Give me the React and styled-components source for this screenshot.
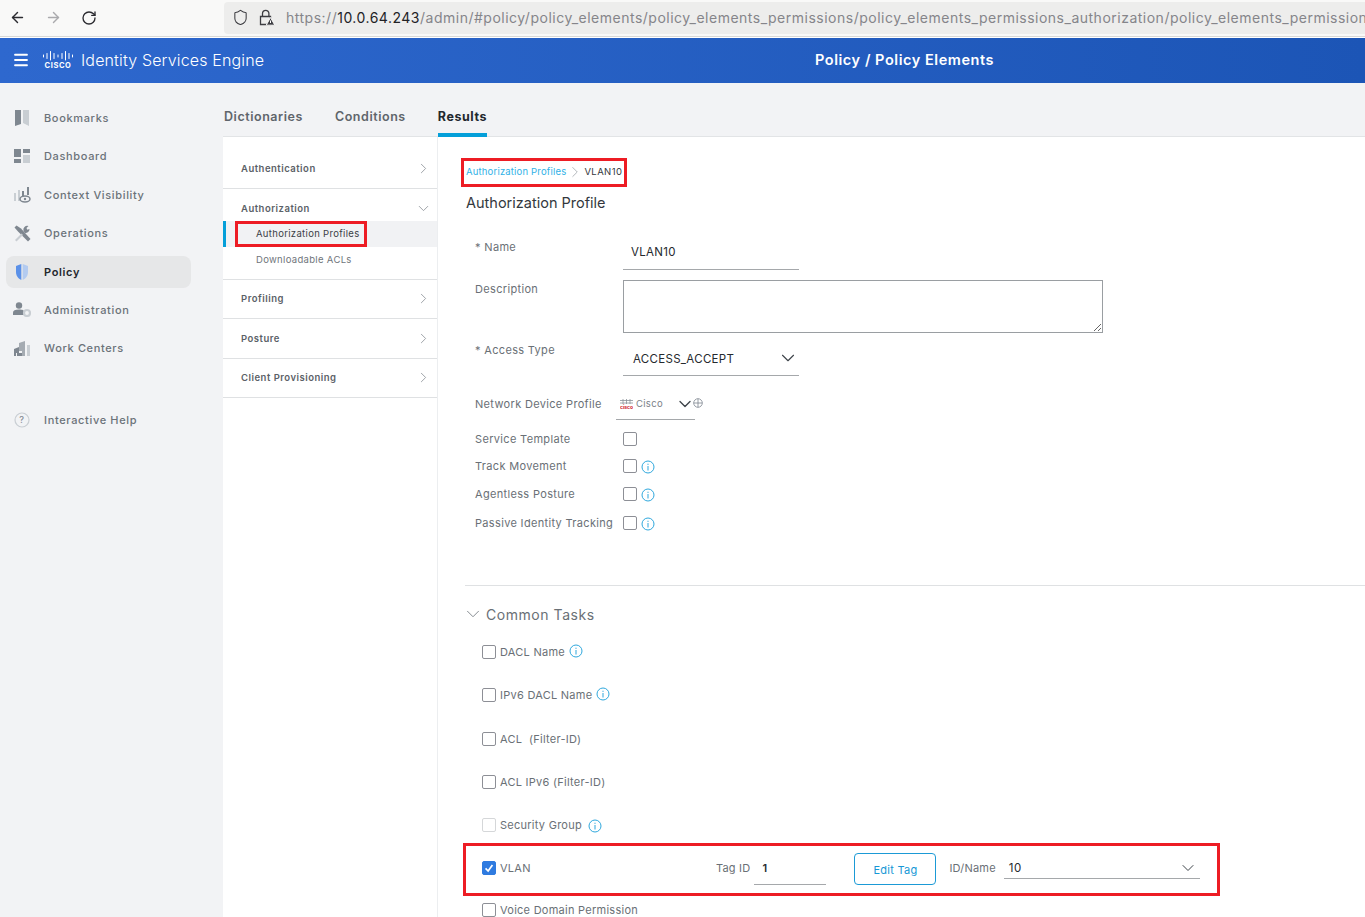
import React from 'react';
import styled, { createGlobalStyle } from 'styled-components';
import { ArrowLeft, ArrowRight, RotateCw, Shield, ChevronRight, ChevronDown, Menu } from 'lucide-react';

const GlobalStyle = createGlobalStyle`
  html, body { margin: 0; padding: 0; height: 100%; overflow: hidden; background: #fff; }
  body { font-family: Inter, "Noto Sans", sans-serif; }
`;

const BookmarkIcon = () => (
  <svg width="16" height="18" viewBox="0 0 16 18">
    <path d="M1 1h6v14l-6 2z" fill="#7f8790" />
    <path d="M9 1h6v16l-6-3z" fill="#c9ced3" />
  </svg>
);
const DashboardIcon = () => (
  <svg width="16" height="14" viewBox="0 0 16 14">
    <rect x="0" y="0" width="7" height="8" fill="#7f8790" />
    <rect x="9" y="0" width="7" height="4" fill="#7f8790" />
    <rect x="9" y="6" width="7" height="8" fill="#c9ced3" />
    <rect x="0" y="10" width="7" height="4" fill="#7f8790" />
  </svg>
);
const ContextIcon = () => (
  <svg width="17" height="16" viewBox="0 0 17 16">
    <rect x="0" y="6" width="2" height="8" fill="#c9ced3" />
    <rect x="4" y="3" width="2" height="11" fill="#c9ced3" />
    <rect x="8" y="4" width="2" height="5" fill="#7f8790" />
    <rect x="13" y="0" width="2" height="8" fill="#7f8790" />
    <ellipse cx="11" cy="12" rx="5" ry="3" fill="none" stroke="#7f8790" strokeWidth="1.5" />
    <circle cx="11" cy="12" r="1.2" fill="#7f8790" />
  </svg>
);
const OperationsIcon = () => (
  <svg width="17" height="17" viewBox="0 0 17 17">
    <path d="M0.500 2.500 2.500 0.500 7 3.500 16.500 14 14 16.500 4 6.500z" fill="#7f8790" />
    <path d="M1 15l6.500-6.500 1.500 1.500L2.500 16.500z" fill="#c9ced3" />
    <path d="M9.500 6a4 4 0 0 1 5-5l-2 2 .8 1.700L15.500 4a4 4 0 0 1-4.500 4z" fill="#7f8790" />
  </svg>
);
const PolicyIcon = () => (
  <svg width="14" height="16" viewBox="0 0 14 16">
    <path d="M6.300 0v16C2.500 14.500 1 11 1 8V2z" fill="#5b91e8" />
    <path d="M7.700 0v16c3.800-1.500 5.300-5 5.300-8V2z" fill="#b3cbf0" />
  </svg>
);
const AdminIcon = () => (
  <svg width="18" height="15" viewBox="0 0 18 15">
    <circle cx="6" cy="3.500" r="3.200" fill="#7f8790" />
    <path d="M0 13v-2.500C0 8.500 2 7.500 6 7.500s5 1 5 2V13z" fill="#7f8790" />
    <circle cx="14" cy="11" r="3" fill="none" stroke="#c9ced3" strokeWidth="2.200" />
  </svg>
);
const WorkIcon = () => (
  <svg width="17" height="15" viewBox="0 0 17 15">
    <path d="M0 8l5-2v9H3v-3H2v3H0z" fill="#7f8790" />
    <path d="M5 12h3v3H5z" fill="#7f8790" />
    <path d="M5 2l6-2v15H8v-5H5z" fill="#a5abb2" />
    <rect x="13" y="4" width="3" height="11" fill="#c9ced3" />
  </svg>
);
const HelpIcon = () => (
  <svg width="16" height="16" viewBox="0 0 16 16">
    <circle cx="8" cy="8" r="7" fill="none" stroke="#c9ced3" strokeWidth="1.200" />
    <text x="8" y="11" textAnchor="middle" fontSize="9" fill="#7f8790" fontFamily="Inter, sans-serif">?</text>
  </svg>
);
const LockIcon = () => (
  <svg width="16" height="17" viewBox="0 0 16 17">
    <path d="M3.500 7V4.500a3.200 3.200 0 0 1 6.400 0V7" fill="none" stroke="#3d3d42" strokeWidth="1.300" />
    <path d="M1.500 7.500h10v8h-10z" fill="none" stroke="#3d3d42" strokeWidth="1.300" />
    <path d="M11.500 8.500l4.300 7.700H7.200z" fill="#3d3d42" stroke="#f9f9f8" />
    <rect x="11" y="11.500" width="1" height="2.500" fill="#fff" />
  </svg>
);
const CiscoLogo = () => (
  <svg width="30" height="17" viewBox="0 0 30 17">
    <g stroke="#fff" strokeWidth="1" strokeLinecap="round">
      {[[0.5, 4, 6], [4, 2.500, 7.500], [7.500, 0.500, 9], [11, 2.500, 7.500], [15, 4, 6], [19, 2.500, 7.500], [22.500, 0.500, 9], [26, 2.500, 7.500], [29.500, 4, 6]].map(([x, y1, y2]) => (
        <line key={x} x1={x} x2={x} y1={y1} y2={y2} />
      ))}
    </g>
    <text x="15" y="16.500" textAnchor="middle" fontSize="7.500" fontWeight="700" letterSpacing="0.6" fill="#fff" fontFamily="Inter, sans-serif">CISCO</text>
  </svg>
);
const SmallCisco = () => (
  <svg width="13" height="11" viewBox="0 0 13 11">
    <path d="M0 2.500h13M0 5h13M3 1v5M6.500 1v5M10 1v5" stroke="#8a9299" strokeWidth="0.8" />
    <text x="6.500" y="10.800" textAnchor="middle" fontSize="5" fontWeight="700" fill="#d0202e" fontFamily="Inter, sans-serif">cisco</text>
  </svg>
);
const GlobeIcon = () => (
  <svg width="10" height="10" viewBox="0 0 10 10" fill="none" stroke="#7f8790" strokeWidth="0.8">
    <circle cx="5" cy="5" r="4.300" />
    <path d="M5 .7v8.600M.7 5h8.600" />
  </svg>
);
const InfoIcon = () => (
  <svg width="14" height="14" viewBox="0 0 14 14">
    <circle cx="7" cy="7" r="6" fill="none" stroke="#2fa8dd" strokeWidth="1" />
    <rect x="6.500" y="6" width="1" height="4.500" fill="#2fa8dd" />
    <rect x="6.500" y="3.700" width="1" height="1.200" fill="#2fa8dd" />
  </svg>
);
const CheckMark = () => (
  <svg width="14" height="14" viewBox="0 0 14 14">
    <path d="M3 7.500 6 10.500 11 3.500" fill="none" stroke="#fff" strokeWidth="2" />
  </svg>
);

const navItems = [
  { label: 'Bookmarks', icon: BookmarkIcon },
  { label: 'Dashboard', icon: DashboardIcon },
  { label: 'Context Visibility', icon: ContextIcon },
  { label: 'Operations', icon: OperationsIcon },
  { label: 'Policy', icon: PolicyIcon, active: true },
  { label: 'Administration', icon: AdminIcon },
  { label: 'Work Centers', icon: WorkIcon },
];

const taskRows = [
  { label: 'DACL Name', info: true, raised: true },
  { label: 'IPv6 DACL Name', info: true, raised: true },
  { label: 'ACL  (Filter-ID)' },
  { label: 'ACL IPv6 (Filter-ID)' },
  { label: 'Security Group', info: true, disabled: true, gapped: true },
];

const closedChevron = <ChevronRight size={17} color="#8f959b" strokeWidth={1.200} />;

export default function App() {
  return (
    <Page>
      <GlobalStyle />
      <BrowserBar>
        <BrowserButton><ArrowLeft size={17} color="#2b2b30" /></BrowserButton>
        <BrowserButton><ArrowRight size={17} color="#aaaaad" /></BrowserButton>
        <BrowserButton><RotateCw size={16} color="#2b2b30" /></BrowserButton>
        <UrlBar>
          <UrlIcon><Shield size={17} color="#3d3d42" strokeWidth={1.500} /></UrlIcon>
          <UrlIcon><LockIcon /></UrlIcon>
          <UrlText>
            https://<strong>10.0.64.243</strong>/admin/#policy/policy_elements/policy_elements_permissions/policy_elements_permissions_authorization/policy_elements_permissions
          </UrlText>
        </UrlBar>
      </BrowserBar>

      <Header>
        <Menu size={18} color="#fff" strokeWidth={2.400} />
        <LogoSlot><CiscoLogo /></LogoSlot>
        <ProductName>Identity Services Engine</ProductName>
        <HeaderTitle>Policy / Policy Elements</HeaderTitle>
      </Header>

      <Body>
        <Sidebar>
          {navItems.map(({ label, icon: Icon, active }) => (
            <NavItem key={label} $active={active}>
              <NavIcon><Icon /></NavIcon>
              {label}
            </NavItem>
          ))}
          <HelpItem>
            <NavIcon><HelpIcon /></NavIcon>
            Interactive Help
          </HelpItem>
        </Sidebar>

        <Content>
          <Tabs>
            <Tab>Dictionaries</Tab>
            <Tab>Conditions</Tab>
            <Tab $active>Results</Tab>
          </Tabs>

          <Split>
            <SubNav>
              <SubGroup $h={52}>
                <SubHead $pad="11px 5px 0 18px">Authentication{closedChevron}</SubHead>
              </SubGroup>
              <SubGroup $h={91}>
                <SubHead $pad="6px 5px 0 18px" $h="32px">
                  Authorization
                  <ChevronDown size={17} color="#8f959b" strokeWidth={1.200} />
                </SubHead>
                <SubLink $active><Marked>Authorization Profiles</Marked></SubLink>
                <SubLink>Downloadable ACLs</SubLink>
              </SubGroup>
              <SubGroup $h={39}>
                <SubHead $pad="0 5px 2px 18px">Profiling{closedChevron}</SubHead>
              </SubGroup>
              <SubGroup $h={40}>
                <SubHead>Posture{closedChevron}</SubHead>
              </SubGroup>
              <SubGroup $h={39}>
                <SubHead $pad="0 5px 2px 18px">Client Provisioning{closedChevron}</SubHead>
              </SubGroup>
            </SubNav>

            <Main>
              <Breadcrumb>
                <CrumbLink>Authorization Profiles</CrumbLink>
                <ChevronRight size={18} color="#9aa0a6" strokeWidth={1} />
                <CrumbCurrent>VLAN10</CrumbCurrent>
              </Breadcrumb>
              <PageTitle>Authorization Profile</PageTitle>

              <Form>
                <NameRow>
                  <FieldLabel>* Name</FieldLabel>
                  <TextField>VLAN10</TextField>
                </NameRow>
                <DescriptionRow>
                  <FieldLabel>Description</FieldLabel>
                  <TextArea />
                </DescriptionRow>
                <AccessRow>
                  <FieldLabel>* Access Type</FieldLabel>
                  <SelectField>
                    ACCESS_ACCEPT
                    <ChevronDown size={22} color="#3d4349" strokeWidth={1.200} />
                  </SelectField>
                </AccessRow>
                <ProfileRow>
                  <FieldLabel>Network Device Profile</FieldLabel>
                  <ProfileSelect>
                    <SmallCisco />
                    <ProfileName>Cisco</ProfileName>
                    <ChevronDown size={20} color="#3d4349" strokeWidth={1.600} />
                  </ProfileSelect>
                  <GlobeSlot><GlobeIcon /></GlobeSlot>
                </ProfileRow>
                <CheckRow $h={27}>
                  <FieldLabel>Service Template</FieldLabel>
                  <CheckBox />
                </CheckRow>
                <CheckRow $h={27}>
                  <FieldLabel>Track Movement</FieldLabel>
                  <CheckBox />
                  <InfoSlot><InfoIcon /></InfoSlot>
                </CheckRow>
                <CheckRow $h={29}>
                  <FieldLabel>Agentless Posture</FieldLabel>
                  <CheckBox />
                  <InfoSlot><InfoIcon /></InfoSlot>
                </CheckRow>
                <CheckRow $h={29}>
                  <FieldLabel>Passive Identity Tracking</FieldLabel>
                  <CheckBox />
                  <InfoSlot><InfoIcon /></InfoSlot>
                </CheckRow>
              </Form>

              <Divider />

              <SectionHead>
                <ChevronDown size={22} color="#7c8288" strokeWidth={1} />
                Common Tasks
              </SectionHead>

              <TaskList>
                {taskRows.map((row) => (
                  <TaskRow key={row.label}>
                    <CheckBox $disabled={row.disabled} />
                    <TaskLabel>{row.label}</TaskLabel>
                    {row.info && (
                      <TaskInfo $raised={row.raised} $gapped={row.gapped}><InfoIcon /></TaskInfo>
                    )}
                  </TaskRow>
                ))}
              </TaskList>

              <VlanBox>
                <VlanName>
                  <CheckBox $checked><CheckMark /></CheckBox>
                  <TaskLabel>VLAN</TaskLabel>
                </VlanName>
                <TagLabel>Tag ID</TagLabel>
                <TagInput>1</TagInput>
                <EditButton>Edit Tag</EditButton>
                <TagLabel>ID/Name</TagLabel>
                <VlanSelect>
                  10
                  <ChevronDown size={20} color="#3d4349" strokeWidth={1.200} />
                </VlanSelect>
              </VlanBox>

              <VoiceRow>
                <CheckBox />
                <TaskLabel>Voice Domain Permission</TaskLabel>
              </VoiceRow>
            </Main>
          </Split>
        </Content>
      </Body>
    </Page>
  );
}

const Page = styled.div`
  width: 1365px;
  height: 917px;
  overflow: hidden;
  display: flex;
  flex-direction: column;
  background: #fff;
`;

const BrowserBar = styled.div`
  height: 37px;
  flex: none;
  box-sizing: border-box;
  padding: 0 0 1px 0;
  margin-left: -1px;
  display: flex;
  align-items: center;
  background: #f9f9f8;
  border-bottom: 1px solid #d8d8d6;
`;

const BrowserButton = styled.div`
  width: 36px;
  display: flex;
  justify-content: center;
`;

const UrlBar = styled.div`
  margin-left: 117px;
  flex: 1;
  min-width: 0;
  height: 32px;
  border-radius: 4px 0 0 4px;
  background: #ededec;
  display: flex;
  align-items: center;
  gap: 10px;
  padding-left: 8px;
  overflow: hidden;
`;

const UrlIcon = styled.span`
  flex: none;
  display: flex;
`;

const UrlText = styled.div`
  margin: 0 0 1px 1px;
  white-space: nowrap;
  font-size: 14px;
  letter-spacing: 0.5px;
  color: #85858a;
  strong { font-weight: 400; color: #222226; }
`;

const Header = styled.header`
  height: 45px;
  flex: none;
  position: relative;
  box-sizing: border-box;
  display: flex;
  align-items: center;
  padding: 0 0 2px 12px;
  margin-top: 1px;
  color: #fff;
  background: linear-gradient(90deg, #2e68ce, #1c55b6);
`;

const LogoSlot = styled.div`
  margin-left: 13px;
  display: flex;
`;

const ProductName = styled.div`
  margin-left: 8px;
  font-size: 16px;
  font-weight: 300;
  letter-spacing: 0.15px;
`;

const HeaderTitle = styled.div`
  position: absolute;
  left: 815px;
  font-size: 14.500px;
  font-weight: 600;
  letter-spacing: 0.55px;
`;

const Body = styled.div`
  flex: 1;
  display: flex;
  min-height: 0;
`;

const Sidebar = styled.nav`
  width: 223px;
  flex: none;
  background: #f2f3f5;
  box-sizing: border-box;
  padding: 19px 0 0 6px;
  display: flex;
  flex-direction: column;
  gap: 6.400px;
`;

const NavItem = styled.div`
  width: 185px;
  height: 32px;
  box-sizing: border-box;
  border-radius: 8px;
  display: flex;
  align-items: center;
  font-size: 11px;
  letter-spacing: 0.65px;
  font-weight: ${(p) => (p.$active ? 600 : 500)};
  color: ${(p) => (p.$active ? '#23282e' : '#6b7279')};
  background: ${(p) => (p.$active ? '#e6e7e8' : 'transparent')};
`;

const HelpItem = styled(NavItem)`
  margin-top: 33px;
`;

const NavIcon = styled.span`
  width: 32px;
  margin-right: 6px;
  display: flex;
  justify-content: center;
`;

const Content = styled.div`
  flex: 1;
  min-width: 0;
  display: flex;
  flex-direction: column;
  background: #fff;
`;

const Tabs = styled.div`
  height: 54px;
  flex: none;
  box-sizing: border-box;
  background: #f2f3f5;
  border-bottom: 1px solid #e2e4e6;
  display: flex;
  align-items: flex-end;
  gap: 32px;
  padding-left: 1px;
`;

const Tab = styled.div`
  height: 28px;
  box-sizing: border-box;
  margin-bottom: -1px;
  font-size: 12.500px;
  letter-spacing: 0.55px;
  font-weight: ${(p) => (p.$active ? 700 : 600)};
  color: ${(p) => (p.$active ? '#23282e' : '#5f656b')};
  border-bottom: 4px solid ${(p) => (p.$active ? '#049fd9' : 'transparent')};
`;

const Split = styled.div`
  flex: 1;
  display: flex;
  min-height: 0;
`;

const SubNav = styled.div`
  width: 215px;
  flex: none;
  box-sizing: border-box;
  border-right: 1px solid #eceef0;
`;

const SubGroup = styled.div`
  height: ${(p) => p.$h}px;
  box-sizing: border-box;
  border-bottom: 1px solid #dfe1e3;
`;

const SubHead = styled.div`
  display: flex;
  align-items: center;
  justify-content: space-between;
  padding: ${(p) => p.$pad || '0 5px 0 18px'};
  height: ${(p) => p.$h || '100%'};
  box-sizing: border-box;
  font-size: 9.500px;
  font-weight: 600;
  letter-spacing: 0.5px;
  color: #5b6167;
`;

const SubLink = styled.div`
  height: 26px;
  box-sizing: border-box;
  display: flex;
  align-items: center;
  padding: 0 0 2px ${(p) => (p.$active ? '30px' : '33px')};
  font-size: 9.500px;
  letter-spacing: 0.32px;
  color: ${(p) => (p.$active ? '#3b4046' : '#6f757b')};
  background: ${(p) => (p.$active ? '#f1f2f4' : 'transparent')};
  border-left: ${(p) => (p.$active ? '3px solid #049fd9' : '0')};
`;

const Marked = styled.span`
  position: relative;
  &::after {
    content: '';
    position: absolute;
    left: -21px;
    right: -8px;
    top: -7px;
    bottom: -8px;
    border: 3px solid #ed1c24;
    pointer-events: none;
  }
`;

const Main = styled.main`
  flex: 1;
  min-width: 0;
  box-sizing: border-box;
  padding: 21px 0 0 27px;
`;

const Breadcrumb = styled.div`
  display: inline-flex;
  align-items: center;
  gap: 0;
  height: 29px;
  box-sizing: border-box;
  margin-left: -4px;
  padding: 0 2px 2px 2px;
  border: 3px solid #ed1c24;
  font-size: 9.500px;
  letter-spacing: 0.18px;
`;

const CrumbLink = styled.span`
  color: #2fb1e6;
`;

const CrumbCurrent = styled.span`
  color: #33383d;
  letter-spacing: 0.4px;
`;

const PageTitle = styled.h1`
  margin: 7px 0 0 1px;
  font-size: 14.500px;
  line-height: 18px;
  font-weight: 400;
  color: #33383d;
`;

const Form = styled.div`
  margin: 0 0 0 10px;
`;

const FieldLabel = styled.div`
  width: 148px;
  flex: none;
  font-size: 11px;
  letter-spacing: 0.33px;
  color: #6a7076;
`;

const NameRow = styled.div`
  display: flex;
  margin-top: 28px;
  height: 30px;
  align-items: flex-start;
`;

const TextField = styled.div`
  width: 176px;
  height: 30px;
  box-sizing: border-box;
  padding: 5px 8px 0;
  font-size: 11.500px;
  letter-spacing: 0.3px;
  color: #25292e;
  border-bottom: 1px solid #a5a8ab;
`;

const DescriptionRow = styled.div`
  display: flex;
  margin-top: 10px;
  height: 53px;
  ${FieldLabel} { padding-top: 2px; }
`;

const TextArea = styled.textarea`
  width: 480px;
  height: 53px;
  box-sizing: border-box;
  margin: 0;
  border: 1px solid #9a9ea2;
  background: #fff;
  outline: none;
`;

const AccessRow = styled.div`
  display: flex;
  height: 47px;
  padding-top: 10px;
`;

const SelectField = styled.div`
  width: 176px;
  height: 33px;
  box-sizing: border-box;
  padding: 9px 0 0 10px;
  display: flex;
  justify-content: space-between;
  font-size: 11.500px;
  letter-spacing: 0.3px;
  color: #25292e;
  border-bottom: 1px solid #a5a8ab;
  svg { margin-top: -5px; }
`;

const ProfileRow = styled.div`
  display: flex;
  height: 37px;
  margin-top: -2px;
  align-items: flex-start;
  ${FieldLabel} { width: 141px; padding-top: 9px; }
`;

const ProfileSelect = styled.div`
  width: 79px;
  height: 32px;
  box-sizing: border-box;
  padding: 10px 0 0 4px;
  display: flex;
  align-items: flex-start;
  border-bottom: 1px solid #a5a8ab;
  svg:last-child { margin: -4px 0 0 auto; }
`;

const ProfileName = styled.span`
  margin-left: 3px;
  font-size: 9.500px;
  letter-spacing: 0.3px;
  color: #7b8187;
`;

const GlobeSlot = styled.span`
  margin: 10px 0 0 -2px;
  display: flex;
`;

const CheckRow = styled.div`
  height: ${(p) => p.$h}px;
  display: flex;
  align-items: center;
`;

const CheckBox = styled.span`
  width: 14px;
  height: 14px;
  flex: none;
  box-sizing: border-box;
  border-radius: 2px;
  display: flex;
  align-items: center;
  justify-content: center;
  background: ${(p) => (p.$checked ? '#2f7be0' : '#fff')};
  border: 1px solid ${(p) => (p.$checked ? '#2f7be0' : p.$disabled ? '#d5d7d9' : '#8d8f96')};
`;

const InfoSlot = styled.span`
  margin: 2px 0 0 4px;
  display: flex;
`;

const Divider = styled.hr`
  margin: 48px 0 0 0;
  border: 0;
  border-top: 1px solid #dfe1e3;
`;

const SectionHead = styled.div`
  margin: 19px 0 0 -3px;
  height: 18px;
  display: flex;
  align-items: center;
  gap: 2px;
  font-size: 14px;
  letter-spacing: 0.55px;
  color: #6a7076;
`;

const TaskList = styled.div`
  margin: 0 0 0 17px;
  padding-top: 22px;
  display: flex;
  flex-direction: column;
  gap: 28.600px;
`;

const TaskRow = styled.div`
  height: 14.600px;
  display: flex;
  align-items: center;
`;

const TaskLabel = styled.span`
  margin-left: 4px;
  white-space: pre;
  font-size: 11px;
  letter-spacing: 0.26px;
  color: #6a7076;
`;

const TaskInfo = styled.span`
  display: flex;
  margin: ${(p) => (p.$raised ? '-3px 0 0' : '2px 0 0')};
  margin-left: ${(p) => (p.$gapped ? '6px' : '4px')};
`;

const VlanBox = styled.div`
  margin: 11px 145px 0 -2px;
  height: 53px;
  box-sizing: border-box;
  border: 3px solid #ed1c24;
  display: flex;
  align-items: center;
  padding-left: 16px;
`;

const VlanName = styled.div`
  width: 234px;
  display: flex;
  align-items: center;
  margin-top: -3px;
`;

const TagLabel = styled.span`
  font-size: 11px;
  letter-spacing: 0.2px;
  color: #6a7076;
  margin-top: -3px;
`;

const TagInput = styled.div`
  width: 72px;
  height: 30px;
  margin: 1px 0 0 4px;
  box-sizing: border-box;
  padding: 6px 0 0 8px;
  font-size: 11px;
  font-weight: 600;
  color: #25292e;
  border-bottom: 1px solid #a5a8ab;
`;

const EditButton = styled.button`
  width: 82px;
  height: 32px;
  margin: -1px 13px 0 28px;
  padding: 2px 0 0;
  box-sizing: border-box;
  border: 1px solid #1b9ad6;
  border-radius: 4px;
  background: #fff;
  font-family: inherit;
  font-size: 11px;
  letter-spacing: 0.26px;
  color: #1598d6;
`;

const VlanSelect = styled.div`
  width: 196px;
  height: 20px;
  margin: -2px 0 0 8px;
  box-sizing: border-box;
  padding: 0 2px 0 5px;
  display: flex;
  justify-content: space-between;
  align-items: center;
  font-size: 11.500px;
  letter-spacing: 0.5px;
  color: #25292e;
  border-bottom: 1px solid #a5a8ab;
`;

const VoiceRow = styled.div`
  margin: 7px 0 0 17px;
  display: flex;
  align-items: center;
`;
